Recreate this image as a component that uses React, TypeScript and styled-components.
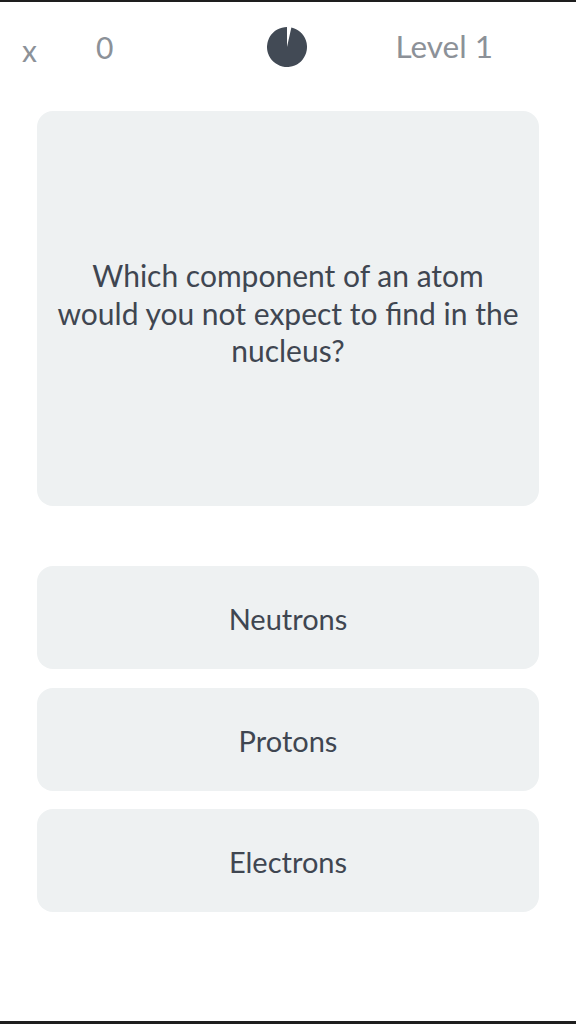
import React from "react";
import styled, { createGlobalStyle } from "styled-components";

const Global = createGlobalStyle`
  html, body { margin: 0; padding: 0; background: #ffffff; }
  body { font-family: Lato, "Open Sans", sans-serif; }
  * { box-sizing: border-box; }
`;

const Screen = styled.div`
  width: 576px;
  height: 1024px;
  display: flex;
  flex-direction: column;
  border-top: 2px solid #1e1e1e;
  border-bottom: 3px solid #1e1e1e;
  background: #ffffff;
`;

const Header = styled.header`
  display: grid;
  grid-template-columns: 1fr auto 1fr;
  align-items: center;
  height: 90px;
  padding: 0 22px;
`;

const Left = styled.div`
  display: flex;
  align-items: center;
  gap: 59px;
`;

const HeaderText = styled.span`
  font-family: Lato, sans-serif;
  font-size: 30px;
  color: #8c9198;
  line-height: 1;
`;

const Close = styled(HeaderText)`
  margin-top: 6px;
`;

const Right = styled.div`
  display: flex;
  justify-content: flex-end;
  padding-right: 61px;
`;

const LevelText = styled(HeaderText)`
  font-size: 31.5px;
`;

const Timer = styled.svg`
  display: block;
  width: 42px;
  height: 42px;
  margin-left: -2px;
`;

const Body = styled.main`
  display: flex;
  flex-direction: column;
  padding: 19px 37px 0;
`;

const QuestionCard = styled.div`
  height: 395px;
  border-radius: 16px;
  background: #eef1f2;
  display: flex;
  align-items: center;
  justify-content: center;
  padding: 0 12px;
  margin-bottom: 60px;
`;

const QuestionText = styled.p`
  margin: 10px 0 0;
  font-family: Lato, sans-serif;
  font-size: 30px;
  line-height: 37.5px;
  color: #3f4651;
  text-align: center;
`;

const Answers = styled.div`
  display: flex;
  flex-direction: column;
  gap: 18.5px;
`;

const Answer = styled.button`
  height: 103px;
  border: none;
  border-radius: 16px;
  background: #eef1f2;
  font-family: Lato, sans-serif;
  font-size: 29px;
  color: #3f4651;
  display: flex;
  align-items: center;
  justify-content: center;
  cursor: pointer;
  padding: 2px 0 0;
`;

function Pie({ fraction }: { fraction: number }) {
  const r = 20;
  const cx = 21;
  const cy = 21;
  const a = fraction * 2 * Math.PI;
  const x = cx + r * Math.sin(a);
  const y = cy - r * Math.cos(a);
  const d = `M ${cx} ${cy} L ${x} ${y} A ${r} ${r} 0 ${fraction < 0.5 ? 1 : 0} 1 ${cx} ${cy - r} Z`;
  return (
    <Timer viewBox="0 0 42 42">
      <path d={d} fill="#424a55" />
    </Timer>
  );
}

export default function App() {
  const answers = ["Neutrons", "Protons", "Electrons"];
  return (
    <>
      <Global />
      <Screen>
        <Header>
          <Left>
            <Close>x</Close>
            <HeaderText>0</HeaderText>
          </Left>
          <Pie fraction={0.035} />
          <Right>
            <LevelText>Level 1</LevelText>
          </Right>
        </Header>
        <Body>
          <QuestionCard>
            <QuestionText>
              Which component of an atom
              <br />
              would you not expect to find in the
              <br />
              nucleus?
            </QuestionText>
          </QuestionCard>
          <Answers>
            {answers.map((a) => (
              <Answer key={a}>{a}</Answer>
            ))}
          </Answers>
        </Body>
      </Screen>
    </>
  );
}
